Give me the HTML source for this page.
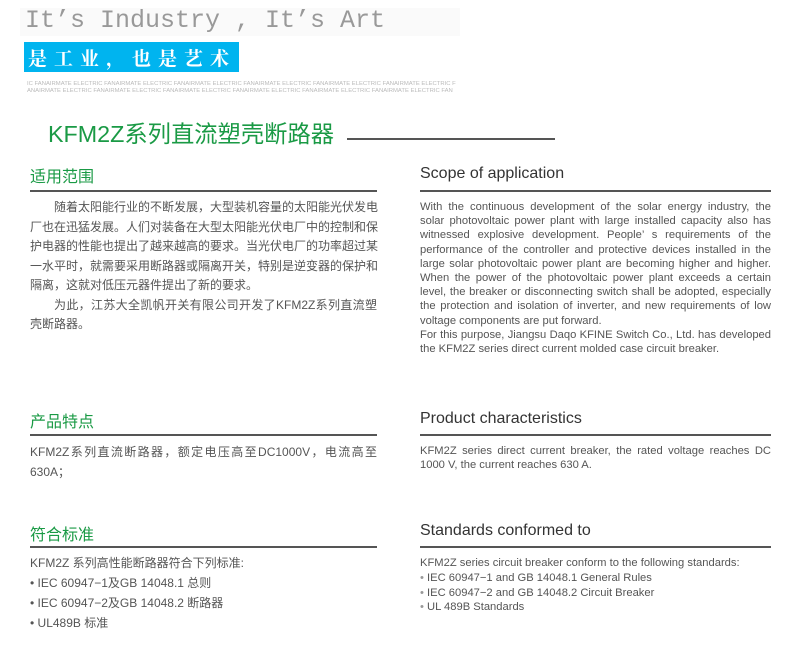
<!DOCTYPE html>
<html><head><meta charset="utf-8"><style>
body{margin:0;width:790px;height:650px;background:#fff;position:relative;overflow:hidden;font-family:"Liberation Sans","Noto Sans CJK SC",sans-serif}
.a{position:absolute;white-space:nowrap}
.j{position:absolute;text-align:justify;text-align-last:justify;white-space:nowrap}
.g{color:#1a9a45}
.hl{position:absolute;height:2px;background:#555}
.cn{font-size:12px;color:#555;line-height:19.5px}
.en{font-size:11.2px;color:#555;line-height:14.2px}
</style></head><body>
<div class="a" style="left:20px;top:8px;width:440px;height:28px;background:#fafafa"></div>
<div class="a" style="left:25px;top:6px;font-family:'Liberation Mono',monospace;font-size:25px;color:#999">It’s Industry , It’s Art</div>
<div class="a" style="left:24px;top:42px;width:215px;height:30px;background:#00b4ef"></div>
<div class="a" style="left:28px;top:44px;font-family:'Noto Serif CJK SC',serif;font-size:19px;font-weight:bold;color:#fff;letter-spacing:7px">是工业，也是艺术</div>
<div class="a" style="left:27px;top:81px;font-size:5.9px;color:#bbb;line-height:7px">IC FANAIRMATE ELECTRIC FANAIRMATE ELECTRIC FANAIRMATE ELECTRIC FANAIRMATE ELECTRIC FANAIRMATE ELECTRIC FANAIRMATE ELECTRIC F<br>ANAIRMATE ELECTRIC FANAIRMATE ELECTRIC FANAIRMATE ELECTRIC FANAIRMATE ELECTRIC FANAIRMATE ELECTRIC FANAIRMATE ELECTRIC FAN</div>
<div class="a g" style="left:48px;top:115px;font-size:23.3px">KFM2Z系列直流塑壳断路器</div>
<div class="hl" style="left:347px;top:138px;width:208px"></div>

<div class="a g" style="left:30px;top:163px;font-size:16px">适用范围</div>
<div class="hl" style="left:30px;top:190px;width:347px"></div>
<div class="a" style="left:420px;top:165px;font-size:16px;color:#333">Scope of application</div>
<div class="hl" style="left:420px;top:190px;width:351px"></div>

<div class="cn">
<div class="j" style="left:54px;top:198px;width:323px">随着太阳能行业的不断发展，大型装机容量的太阳能光伏发电</div>
<div class="j" style="left:30px;top:217.5px;width:347px">厂也在迅猛发展。人们对装备在大型太阳能光伏电厂中的控制和保</div>
<div class="j" style="left:30px;top:237px;width:347px">护电器的性能也提出了越来越高的要求。当光伏电厂的功率超过某</div>
<div class="j" style="left:30px;top:256.5px;width:347px">一水平时，就需要采用断路器或隔离开关，特别是逆变器的保护和</div>
<div class="a" style="left:30px;top:276px">隔离，这就对低压元器件提出了新的要求。</div>
<div class="j" style="left:54px;top:295.5px;width:323px">为此，江苏大全凯帆开关有限公司开发了KFM2Z系列直流塑</div>
<div class="a" style="left:30px;top:315px">壳断路器。</div>
</div>

<div class="en">
<div class="j" style="left:420px;top:200px;width:351px">With the continuous development of the solar energy industry, the</div>
<div class="j" style="left:420px;top:214.2px;width:351px">solar photovoltaic power plant with large installed capacity also has</div>
<div class="j" style="left:420px;top:228.4px;width:351px">witnessed explosive development. People’ s requirements of the</div>
<div class="j" style="left:420px;top:242.6px;width:351px">performance of the controller and protective devices installed in the</div>
<div class="j" style="left:420px;top:256.8px;width:351px">large solar photovoltaic power plant are becoming higher and higher.</div>
<div class="j" style="left:420px;top:271px;width:351px">When the power of the photovoltaic power plant exceeds a certain</div>
<div class="j" style="left:420px;top:285.2px;width:351px">level, the breaker or disconnecting switch shall be adopted, especially</div>
<div class="j" style="left:420px;top:299.4px;width:351px">the protection and isolation of inverter, and new requirements of low</div>
<div class="a" style="left:420px;top:313.6px">voltage components are put forward.</div>
<div class="j" style="left:420px;top:327.8px;width:351px">For this purpose, Jiangsu Daqo KFINE Switch Co., Ltd. has developed</div>
<div class="a" style="left:420px;top:342px">the KFM2Z series direct current molded case circuit breaker.</div>
</div>

<div class="a g" style="left:30px;top:408px;font-size:16px">产品特点</div>
<div class="hl" style="left:30px;top:434px;width:347px"></div>
<div class="a" style="left:420px;top:410px;font-size:16px;color:#333">Product characteristics</div>
<div class="hl" style="left:420px;top:434px;width:351px"></div>
<div class="cn">
<div class="j" style="left:30px;top:443px;width:347px">KFM2Z系列直流断路器，额定电压高至DC1000V，电流高至</div>
<div class="a" style="left:30px;top:462.5px">630A；</div>
</div>
<div class="en">
<div class="j" style="left:420px;top:444px;width:351px">KFM2Z series direct current breaker, the rated voltage reaches DC</div>
<div class="a" style="left:420px;top:458.2px">1000 V, the current reaches 630 A.</div>
</div>

<div class="a g" style="left:30px;top:521px;font-size:16px">符合标准</div>
<div class="hl" style="left:30px;top:546px;width:347px"></div>
<div class="a" style="left:420px;top:522px;font-size:16px;color:#333">Standards conformed to</div>
<div class="hl" style="left:420px;top:546px;width:351px"></div>
<div class="cn">
<div class="a" style="left:30px;top:554px">KFM2Z 系列高性能断路器符合下列标准:</div>
<div class="a" style="left:30px;top:574px">• IEC 60947−1及GB 14048.1 总则</div>
<div class="a" style="left:30px;top:594px">• IEC 60947−2及GB 14048.2 断路器</div>
<div class="a" style="left:30px;top:614px">• UL489B 标准</div>
</div>
<div class="en">
<div class="a" style="left:420px;top:556px">KFM2Z series circuit breaker conform to the following standards:</div>
<div class="a" style="left:420px;top:571px"><span style="color:#999">•</span> IEC 60947−1 and GB 14048.1 General Rules</div>
<div class="a" style="left:420px;top:585.5px"><span style="color:#999">•</span> IEC 60947−2 and GB 14048.2 Circuit Breaker</div>
<div class="a" style="left:420px;top:600px"><span style="color:#999">•</span> UL 489B Standards</div>
</div>
</body></html>
